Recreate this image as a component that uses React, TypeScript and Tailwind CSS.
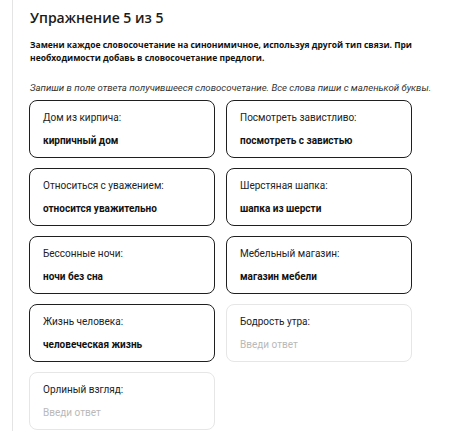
const items = [
  { label: "Дом из кирпича:", answer: "кирпичный дом" },
  { label: "Посмотреть завистливо:", answer: "посмотреть с завистью" },
  { label: "Относиться с уважением:", answer: "относится уважительно" },
  { label: "Шерстяная шапка:", answer: "шапка из шерсти" },
  { label: "Бессонные ночи:", answer: "ночи без сна" },
  { label: "Мебельный магазин:", answer: "магазин мебели" },
  { label: "Жизнь человека:", answer: "человеческая жизнь" },
  { label: "Бодрость утра:", answer: "" },
  { label: "Орлиный взгляд:", answer: "" },
];

function AnswerCard({ label, answer }: { label: string; answer: string }) {
  const filled = answer.length > 0;
  return (
    <div
      className={`h-[58px] rounded-[8px] px-[13px] pt-[10px] ${
        filled ? "border-[1.5px] border-[#1f1f1f]" : "border border-[#e6e6e6]"
      }`}
      style={{ fontFamily: "Roboto, sans-serif" }}
    >
      <div className="text-[10px] leading-[14px] text-[#222]">{label}</div>
      {filled ? (
        <div className="mt-[9px] text-[10px] leading-[14px] font-bold text-[#111]">{answer}</div>
      ) : (
        <div className="mt-[9px] text-[10px] leading-[14px] text-[#b9b9b9]">Введи ответ</div>
      )}
    </div>
  );
}

export default function App() {
  return (
    <div
      className="min-h-[431px] bg-white"
      style={{ fontFamily: '"Open Sans", "Noto Sans", sans-serif' }}
    >
      <div className="ml-[12px] min-h-[431px] border-l border-[#e4e4e4] pl-[16px] pt-[7px]">
        <h1 className="ml-px text-[14px] leading-[22px] font-semibold text-[#1a1a1a]">
          Упражнение 5 из 5
        </h1>
        <p className="ml-px mt-[9px] w-[400px] text-[8.5px] leading-[13px] font-bold text-[#111]">
          Замени каждое словосочетание на синонимичное, используя другой тип связи. При необходимости добавь в словосочетание предлоги.
        </p>
        <p
          className="ml-px mt-[17px] whitespace-nowrap text-[9.6px] leading-[14px] italic text-[#333]"
          style={{ fontFamily: "Roboto, sans-serif" }}
        >
          Запиши в поле ответа получившееся словосочетание. Все слова пиши с маленькой буквы.
        </p>
        <div className="mt-[5px] grid grid-cols-[186px_186px] gap-x-[11px] gap-y-[10px]">
          {items.map((item) => (
            <AnswerCard key={item.label} label={item.label} answer={item.answer} />
          ))}
        </div>
      </div>
    </div>
  );
}
